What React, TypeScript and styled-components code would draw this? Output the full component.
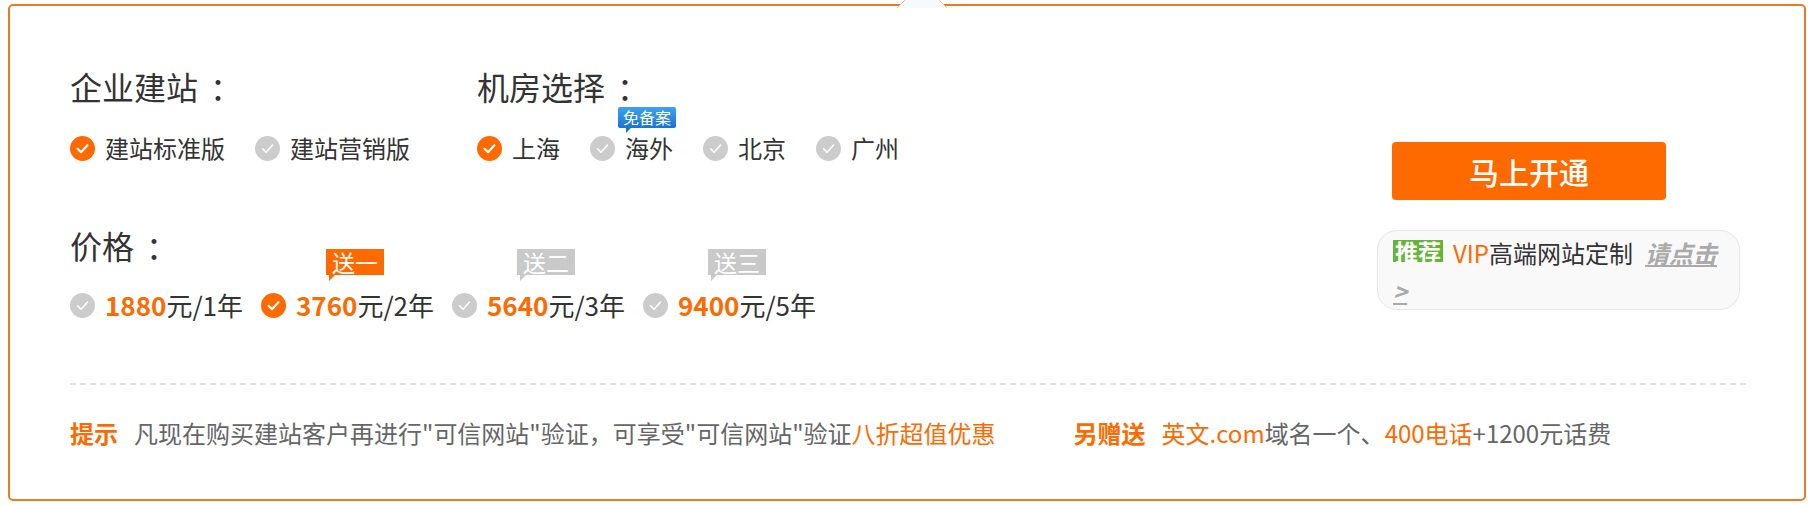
import React from "react";
import styled, { createGlobalStyle } from "styled-components";

const Global = createGlobalStyle`
  html, body { margin: 0; padding: 0; background: #fff; }
  body { font-family: "Noto Sans CJK SC", "Noto Sans", sans-serif; color: #333; }
  * { box-sizing: border-box; }
`;

const ORANGE = "#ff6a00";

const Panel = styled.div`
  position: relative;
  margin: 4px 10px 0 8px;
  border: 2px solid #eb7a22;
  border-radius: 5px;
  padding: 60px 58px 50px 60px;
`;

const Notch = styled.svg`
  position: absolute;
  top: -6px;
  left: 885px;
`;

const Top = styled.div`
  display: flex;
  justify-content: space-between;
`;

const Left = styled.div`
  display: flex;
  flex-direction: column;
`;

const Row = styled.div`
  display: flex;
`;

const Group = styled.div<{ $width?: number; $mt?: number }>`
  display: flex;
  flex-direction: column;
  width: ${(p) => (p.$width ? `${p.$width}px` : "auto")};
  margin-top: ${(p) => p.$mt ?? 0}px;
`;

const Title = styled.div`
  font-size: 32px;
  line-height: 40px;
  color: #333;
`;

const Colon = styled.span`
  margin-left: 12px;
`;

const Options = styled.div<{ $gap: number; $mt: number }>`
  display: flex;
  align-items: center;
  gap: ${(p) => p.$gap}px;
  margin-top: ${(p) => p.$mt}px;
  height: 32px;
`;

const Option = styled.div`
  position: relative;
  display: flex;
  align-items: center;
  gap: 10px;
  font-size: 24px;
  line-height: 32px;
  color: #333;
  white-space: nowrap;
`;

const PriceNum = styled.span`
  color: ${ORANGE};
  font-weight: 700;
  font-size: 26px;
`;

const PriceUnit = styled.span`
  font-size: 26px;
  color: #333;
`;

const Tag = styled.span<{ $on: boolean }>`
  position: absolute;
  top: -40px;
  left: 65px;
  height: 26px;
  padding: 0 6px;
  font-size: 23px;
  line-height: 26px;
  color: #fff;
  background: ${(p) => (p.$on ? ORANGE : "#c9c9c9")};
  &::after {
    content: "";
    position: absolute;
    left: 3px;
    bottom: -6px;
    border-style: solid;
    border-width: 6px 6px 0 0;
    border-color: ${(p) => (p.$on ? ORANGE : "#c9c9c9")} transparent transparent transparent;
  }
`;

const BlueTag = styled.span`
  position: absolute;
  top: -25px;
  left: 28px;
  height: 21px;
  padding: 0 5px;
  font-size: 16px;
  line-height: 21px;
  color: #fff;
  border-radius: 2px;
  background: linear-gradient(#3da2f0, #1a74d2);
  &::after {
    content: "";
    position: absolute;
    left: 8px;
    bottom: -5px;
    border-style: solid;
    border-width: 5px 5px 0 0;
    border-color: #1a74d2 transparent transparent transparent;
  }
`;

const Right = styled.div`
  width: 363px;
  display: flex;
  flex-direction: column;
  padding-top: 76px;
  margin-right: 6px;
`;

const OpenButton = styled.button`
  margin-left: 15px;
  width: 274px;
  height: 58px;
  border: none;
  border-radius: 4px;
  background: ${ORANGE};
  color: #fff;
  font-family: "Noto Sans CJK SC", sans-serif;
  font-size: 30px;
  font-weight: 500;
  cursor: pointer;
`;

const VipBox = styled.div`
  margin-top: 30px;
  height: 80px;
  padding: 3px 14px 1px 15px;
  border: 1px solid #e6e6e6;
  border-radius: 20px;
  background: #f9f9f9;
  font-size: 24px;
  line-height: 38px;
  color: #333;
`;

const Recommend = styled.span`
  display: inline-block;
  background: #64b536;
  color: #fff;
  font-weight: 700;
  font-size: 23px;
  line-height: 22px;
  padding: 0 2px;
  margin-right: 10px;
  vertical-align: 2px;
`;

const Orange = styled.span<{ $bold?: boolean }>`
  color: ${ORANGE};
  font-weight: ${(p) => (p.$bold ? 700 : 400)};
`;

const MoreLink = styled.a`
  color: #aaa;
  font-style: italic;
  font-weight: 700;
  text-decoration: underline;
  margin-left: 12px;
`;

const Dashed = styled.div`
  margin-top: 62px;
  border-top: 2px dashed #e3e3e3;
`;

const Footer = styled.div`
  display: flex;
  margin-top: 32px;
  font-size: 24px;
  line-height: 32px;
  color: #666;
  white-space: nowrap;
`;

const Note = styled.div<{ $ml?: number }>`
  margin-left: ${(p) => p.$ml ?? 0}px;
`;

const Label = styled.span`
  color: ${ORANGE};
  font-weight: 700;
  margin-right: 16px;
`;

function Check({ on }: { on: boolean }) {
  return (
    <svg width="25" height="25" viewBox="0 0 25 25">
      <circle cx="12.5" cy="12.5" r="12.5" fill={on ? ORANGE : "#cccccc"} />
      <path
        d="M7.6 12.8 L11 16.2 L17.4 9.2"
        fill="none"
        stroke="#fff"
        strokeWidth={on ? 2.2 : 1.6}
        strokeLinecap="round"
        strokeLinejoin="round"
      />
    </svg>
  );
}

const prices = [
  { num: "1880", unit: "元/1年", on: false },
  { num: "3760", unit: "元/2年", on: true, tag: "送一" },
  { num: "5640", unit: "元/3年", on: false, tag: "送二" },
  { num: "9400", unit: "元/5年", on: false, tag: "送三" },
];

export default function App() {
  return (
    <>
      <Global />
      <Panel>
        <Notch width="54" height="8" viewBox="0 0 54 8">
          <polygon points="2,8 10,0 44,0 52,8" fill="#f8f9fb" />
          <polyline points="2,8 10,0" stroke="#f3c6a0" strokeWidth="1" fill="none" />
          <polyline points="44,0 52,8" stroke="#f3c6a0" strokeWidth="1" fill="none" />
        </Notch>
        <Top>
          <Left>
            <Row>
              <Group $width={407}>
                <Title>
                  企业建站<Colon>：</Colon>
                </Title>
                <Options $gap={30} $mt={26}>
                  <Option>
                    <Check on />
                    建站标准版
                  </Option>
                  <Option>
                    <Check on={false} />
                    建站营销版
                  </Option>
                </Options>
              </Group>
              <Group>
                <Title>
                  机房选择<Colon>：</Colon>
                </Title>
                <Options $gap={30} $mt={26}>
                  <Option>
                    <Check on />
                    上海
                  </Option>
                  <Option>
                    <BlueTag>免备案</BlueTag>
                    <Check on={false} />
                    海外
                  </Option>
                  <Option>
                    <Check on={false} />
                    北京
                  </Option>
                  <Option>
                    <Check on={false} />
                    广州
                  </Option>
                </Options>
              </Group>
            </Row>
            <Group $mt={61}>
              <Title>
                价格<Colon>：</Colon>
              </Title>
              <Options $gap={18} $mt={24}>
                {prices.map((p) => (
                  <Option key={p.num}>
                    {p.tag && <Tag $on={p.on}>{p.tag}</Tag>}
                    <Check on={p.on} />
                    <span>
                      <PriceNum>{p.num}</PriceNum>
                      <PriceUnit>{p.unit}</PriceUnit>
                    </span>
                  </Option>
                ))}
              </Options>
            </Group>
          </Left>
          <Right>
            <OpenButton>马上开通</OpenButton>
            <VipBox>
              <Recommend>推荐</Recommend>
              <Orange>VIP</Orange>高端网站定制
              <MoreLink href="#">
                请点击
                <br />
                &gt;
              </MoreLink>
            </VipBox>
          </Right>
        </Top>
        <Dashed />
        <Footer>
          <Note>
            <Label>提示</Label>
            凡现在购买建站客户再进行"可信网站"验证，可享受"可信网站"验证
            <Orange>八折超值优惠</Orange>
          </Note>
          <Note $ml={78}>
            <Label>另赠送</Label>
            <Orange>英文.com</Orange>域名一个、<Orange>400电话</Orange>+1200元话费
          </Note>
        </Footer>
      </Panel>
    </>
  );
}
